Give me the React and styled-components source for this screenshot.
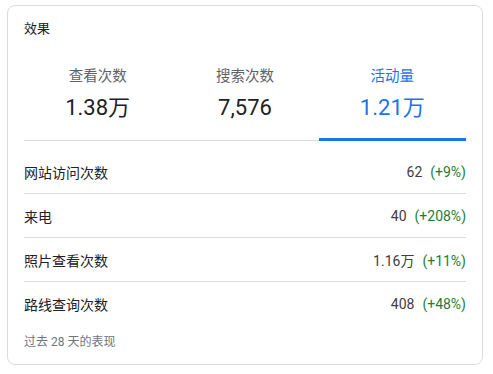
import React from "react";
import styled, { createGlobalStyle } from "styled-components";

const Global = createGlobalStyle`
  html, body { margin: 0; padding: 0; background: #fff; }
  body { font-family: Roboto, "Noto Sans CJK SC", sans-serif; }
`;

const Page = styled.div`
  padding: 5px 0 0 7px;
`;

const Card = styled.section`
  box-sizing: border-box;
  width: 476px;
  height: 360px;
  border: 1px solid #dadce0;
  border-radius: 8px;
  padding: 13px 16px 13px 16px;
  display: flex;
  flex-direction: column;
`;

const Title = styled.h2`
  margin: 0;
  font-size: 13px;
  line-height: 20px;
  font-weight: 400;
  color: #202124;
`;

const Tabs = styled.div`
  display: grid;
  grid-template-columns: repeat(3, 1fr);
  border-bottom: 1px solid #dadce0;
`;

const Tab = styled.div`
  display: flex;
  flex-direction: column;
  align-items: center;
  gap: 7px;
  padding: 28px 0 16px;
  margin-bottom: -1px;
  border-bottom: 3px solid ${(p) => (p.$active ? "#1a73e8" : "transparent")};
`;

const TabLabel = styled.div`
  font-size: 14.5px;
  line-height: 20px;
  color: ${(p) => (p.$active ? "#1a73e8" : "#5f6368")};
`;

const TabValue = styled.div`
  font-size: 22px;
  line-height: 28px;
  color: ${(p) => (p.$active ? "#1a73e8" : "#202124")};
`;

const List = styled.div`
  margin-top: 9px;
  display: flex;
  flex-direction: column;
`;

const Row = styled.div`
  height: 43px;
  display: flex;
  align-items: center;
  justify-content: space-between;
  font-size: 14px;
  color: #202124;
  & + & {
    border-top: 1px solid #dadce0;
  }
`;

const Value = styled.div`
  display: flex;
  align-items: baseline;
  gap: 8px;
  color: #3c4043;
`;

const Change = styled.span`
  color: #188038;
`;

const Footer = styled.div`
  margin-top: 8px;
  font-size: 12px;
  line-height: 18px;
  color: #70757a;
`;

const tabs = [
  { label: "查看次数", value: "1.38万" },
  { label: "搜索次数", value: "7,576" },
  { label: "活动量", value: "1.21万", active: true },
];

const rows = [
  { label: "网站访问次数", value: "62", change: "(+9%)" },
  { label: "来电", value: "40", change: "(+208%)" },
  { label: "照片查看次数", value: "1.16万", change: "(+11%)" },
  { label: "路线查询次数", value: "408", change: "(+48%)" },
];

export default function App() {
  return (
    <Page>
      <Global />
      <Card>
        <Title>效果</Title>
        <Tabs>
          {tabs.map((t) => (
            <Tab key={t.label} $active={t.active}>
              <TabLabel $active={t.active}>{t.label}</TabLabel>
              <TabValue $active={t.active}>{t.value}</TabValue>
            </Tab>
          ))}
        </Tabs>
        <List>
          {rows.map((r) => (
            <Row key={r.label}>
              <span>{r.label}</span>
              <Value>
                <span>{r.value}</span>
                <Change>{r.change}</Change>
              </Value>
            </Row>
          ))}
        </List>
        <Footer>过去 28 天的表现</Footer>
      </Card>
    </Page>
  );
}
